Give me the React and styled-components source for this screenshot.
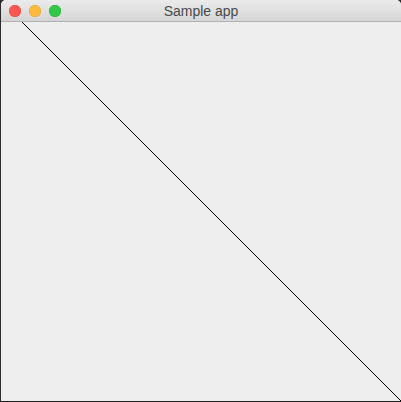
import styled, { createGlobalStyle } from "styled-components";

const GlobalStyle = createGlobalStyle`
  html, body {
    margin: 0;
    padding: 0;
    background: #2b2b2b;
  }
  body {
    font-family: "Liberation Sans", Arial, sans-serif;
  }
`;

const Window = styled.div`
  width: 400px;
  height: 401px;
  margin-left: 1px;
  display: flex;
  flex-direction: column;
  background: #eeeeee;
  border-radius: 5px 5px 0 0;
  overflow: hidden;
  border-bottom: 1px solid #1a1a1a;
`;

const TitleBar = styled.div`
  position: relative;
  height: 21px;
  flex: 0 0 auto;
  display: flex;
  align-items: center;
  justify-content: center;
  background: linear-gradient(#ebebeb, #d5d5d5);
  border-bottom: 1px solid #b1b1b1;
`;

const Lights = styled.div`
  position: absolute;
  left: 8px;
  top: 5px;
  display: flex;
  gap: 8px;
`;

const Light = styled.span`
  width: 12px;
  height: 12px;
  border-radius: 50%;
  background: ${(p) => p.color};
  box-shadow: inset 0 0 0 0.5px ${(p) => p.edge};
`;

const Title = styled.div`
  font-size: 14px;
  color: #4a4a4a;
`;

const Canvas = styled.div`
  flex: 1 1 auto;
  position: relative;
`;

const LineArt = styled.svg`
  display: block;
  width: 400px;
  height: 379px;
`;

export default function App() {
  return (
    <>
      <GlobalStyle />
      <Window>
        <TitleBar>
          <Lights>
            <Light color="#fc5753" edge="#df4744" />
            <Light color="#fdbc40" edge="#de9f34" />
            <Light color="#33c748" edge="#27aa35" />
          </Lights>
          <Title>Sample app</Title>
        </TitleBar>
        <Canvas>
          <LineArt viewBox="0 0 400 379">
            <line x1="21" y1="0" x2="400" y2="379" stroke="#000" strokeWidth="1" />
          </LineArt>
        </Canvas>
      </Window>
    </>
  );
}
